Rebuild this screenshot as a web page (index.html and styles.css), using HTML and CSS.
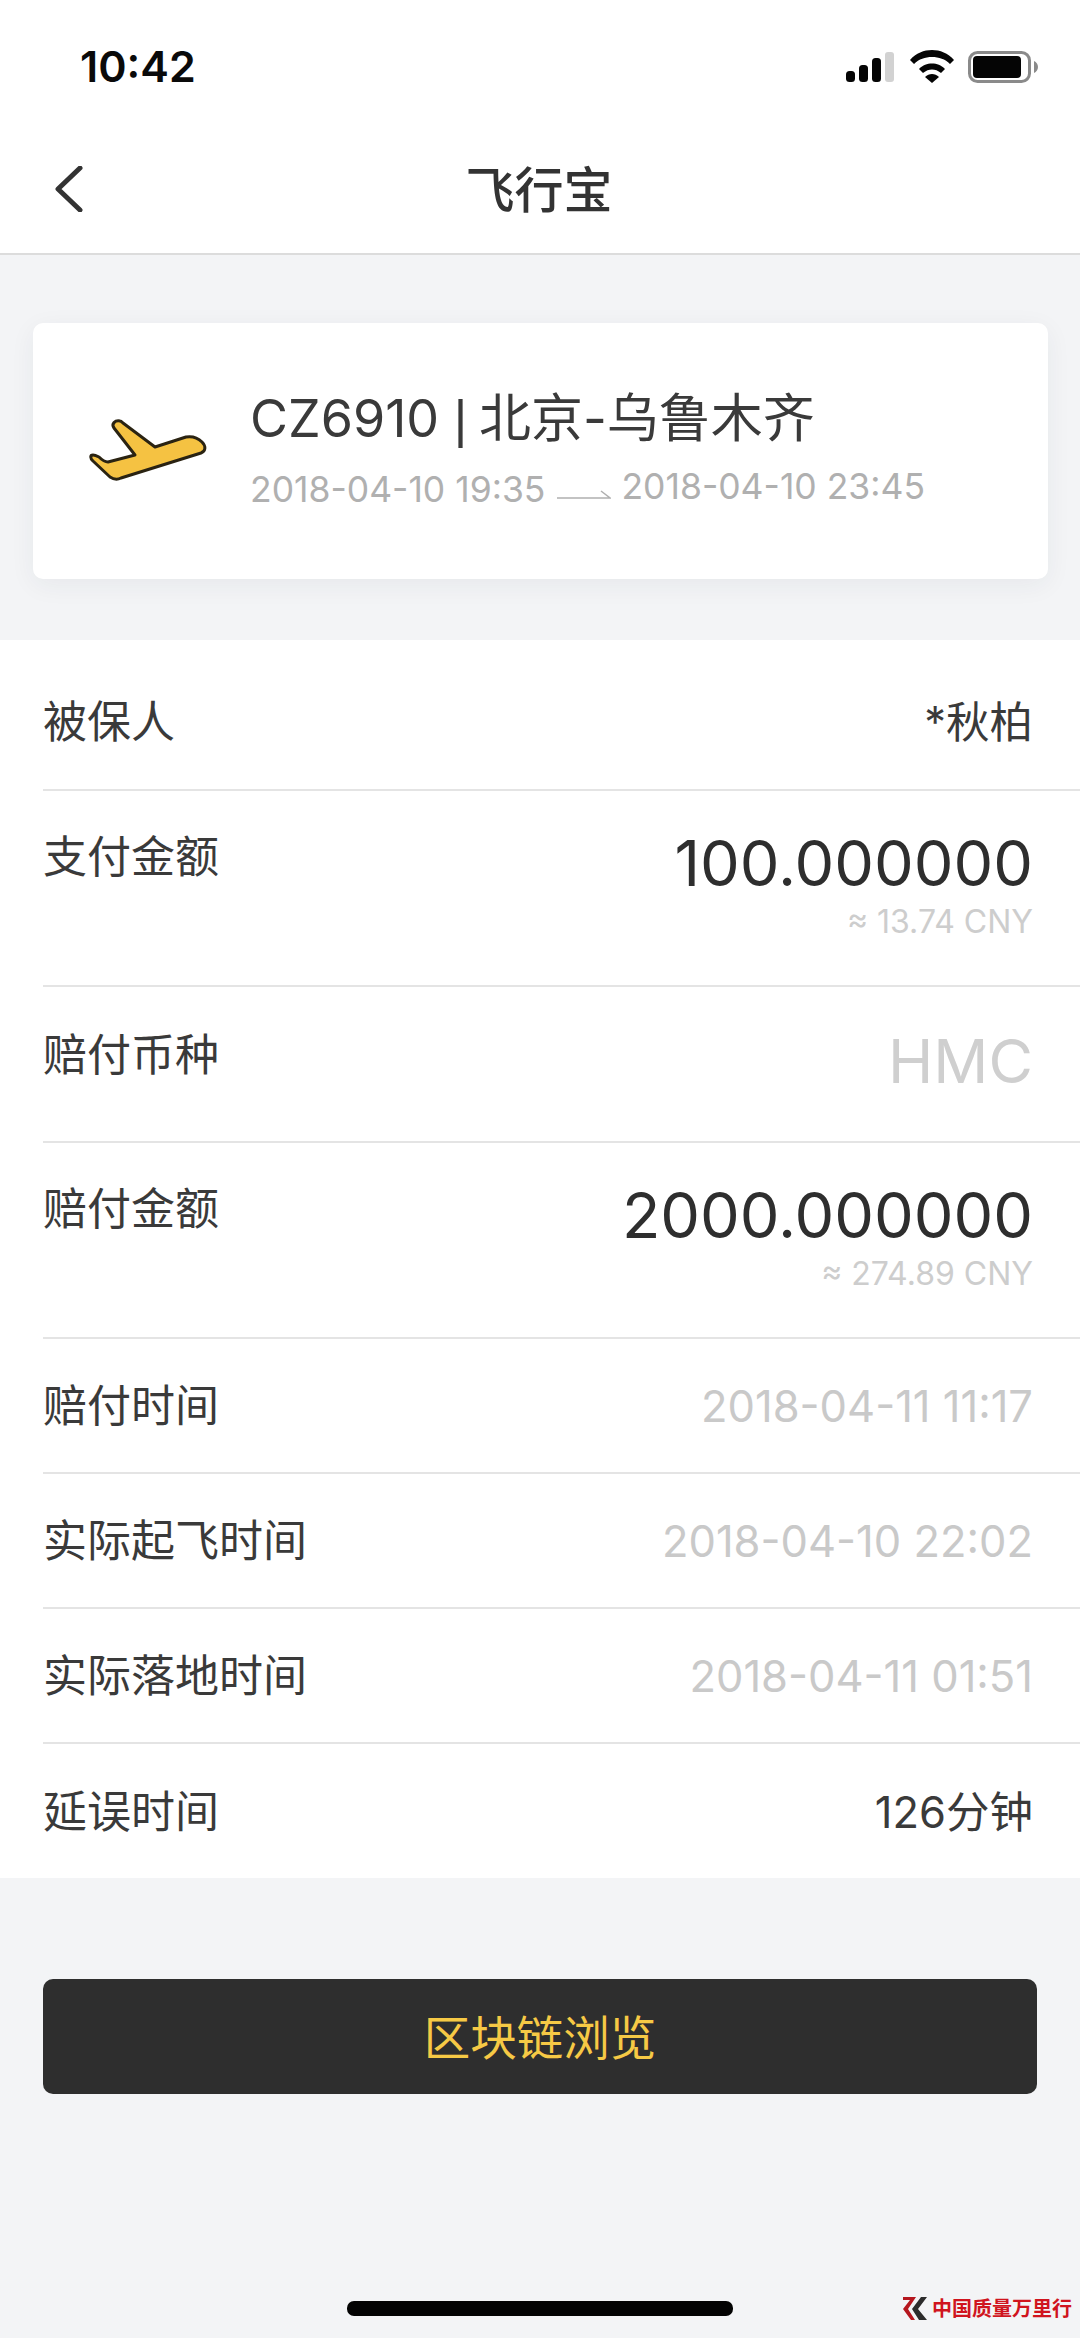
FILE: index.html
```html
<!DOCTYPE html>
<html lang="zh-CN">
<head>
<meta charset="utf-8">
<title>飞行宝</title>
<link rel="stylesheet" href="styles.css">
</head>
<body>
<div class="screen">
  <header class="top">
    <div class="status">
      <span class="clock">10:42</span>
      <div class="status-icons">
        <svg class="signal" viewBox="0 0 48 30"><rect x="0" y="19" width="9" height="11" rx="3.500"/><rect x="13" y="13" width="9" height="17" rx="3.500"/><rect x="26" y="6" width="9" height="24" rx="3.500"/><rect class="signal-off" x="39" y="0" width="9" height="30" rx="3"/></svg>
        <svg class="wifi" viewBox="0 0 44 33"><path d="M0 10C6 3 14 0 22 0s16 3 22 10l-4 4C35 9 29 7 22 7S9 9 4 14z"/><path d="M9 19c4-4 8-5.500 13-5.500S31 15 35 19l-4 4c-3-2.500-6-3.500-9-3.500S16 20.500 13 23z"/><path d="M15 27c2-2 4.500-3 7-3s5 1 7 3l-7 6z"/></svg>
        <svg class="battery" viewBox="0 0 70 32"><rect x="1.500" y="1.500" width="60" height="29" rx="8" fill="none" stroke="#8a8a8a" stroke-width="3"/><rect x="5" y="5" width="48" height="22" rx="4"/><path class="battery-cap" d="M66 10c2.500 1 4 3.500 4 6s-1.500 5-4 6z"/></svg>
      </div>
    </div>
    <nav class="nav">
      <svg class="back" viewBox="0 0 30 46"><path d="M26 2 4 23l22 21" fill="none" stroke="#333" stroke-width="5" stroke-linecap="round" stroke-linejoin="round"/></svg>
      <h1 class="nav-title">飞行宝</h1>
    </nav>
  </header>

  <section class="flight">
    <div class="flight-card">
      <svg class="plane" viewBox="0 0 140 80"><path d="M34 18c-3-4 1-8 6-7 1 0 2 1 3 2l32 24 31-10c6-1 12 1 16 5s4 9-1 11L41 68c-4 2-8 1-11-1L13 51c-3-3-3-6 0-6 2 0 4 1 6 2 3 3 6 5 9 5l27-7z" fill="#f5c242" stroke="#2a2312" stroke-width="3" stroke-linejoin="round"/></svg>
      <div class="flight-info">
        <div class="flight-name">CZ6910 <span class="sep">|</span> 北京-乌鲁木齐</div>
        <div class="flight-times">
          <span>2018-04-10 19:35</span>
          <svg class="arrow" viewBox="0 0 54 10"><path d="M0 9h53L44 2" fill="none" stroke="#b0b0b0" stroke-width="1.500"/></svg>
          <span class="time-end">2018-04-10 23:45</span>
        </div>
      </div>
    </div>
  </section>

  <section class="details">
    <div class="row row-plain"><span class="label">被保人</span><span class="value value-dark">*秋柏</span></div>
    <div class="row row-amount">
      <span class="label">支付金额</span>
      <div class="amount"><span class="amount-num">100.000000</span><span class="amount-sub">≈ 13.74 CNY</span></div>
    </div>
    <div class="row row-coin"><span class="label">赔付币种</span><span class="coin">HMC</span></div>
    <div class="row row-amount">
      <span class="label">赔付金额</span>
      <div class="amount"><span class="amount-num">2000.000000</span><span class="amount-sub">≈ 274.89 CNY</span></div>
    </div>
    <div class="row"><span class="label">赔付时间</span><span class="value">2018-04-11 11:17</span></div>
    <div class="row"><span class="label">实际起飞时间</span><span class="value">2018-04-10 22:02</span></div>
    <div class="row"><span class="label">实际落地时间</span><span class="value">2018-04-11 01:51</span></div>
    <div class="row row-last"><span class="label">延误时间</span><span class="value value-dark">126分钟</span></div>
  </section>

  <div class="action"><button class="chain-btn">区块链浏览</button></div>
  <div class="home-bar"></div>

  <div class="mark">
    <svg class="mark-logo" viewBox="0 0 24 25"><path d="M0 1h13L5 13l7 11H8L0 13l7-9H0z" fill="#b5161e"/><path d="M24 1h-6l-9 12 7 11h8l-9-11z" fill="#2c2c2c"/></svg>
    <span class="mark-text">中国质量万里行</span>
  </div>
</div>
</body>
</html>
```
FILE: styles.css
```css
* { box-sizing: border-box; }

html, body { margin: 0; padding: 0; }

body {
  background: #f3f4f6;
  font-family: Inter, "Noto Sans CJK SC", sans-serif;
  color: #333;
}

.screen {
  position: relative;
  width: 1080px;
  height: 2338px;
  overflow: hidden;
  background: #f3f4f6;
}

/* status bar and navigation */
.top {
  height: 255px;
  background: #fff;
  border-bottom: 2px solid #dcdcdc;
}

.status {
  height: 132px;
  padding: 44px 42px 0 80px;
  display: flex;
  justify-content: space-between;
  align-items: flex-start;
}

.clock {
  font-size: 43px;
  line-height: 44px;
  font-weight: 600;
  color: #0a0a0a;
}

.status-icons {
  display: flex;
  align-items: center;
  gap: 14px;
  padding-top: 6px;
}

.status-icons svg { display: block; fill: #050505; }
.signal { width: 48px; height: 30px; margin-right: 2px; }
.signal .signal-off { fill: #d2d2d2; }
.wifi { width: 44px; height: 33px; }
.battery { width: 70px; height: 32px; }
.battery .battery-cap { fill: #8a8a8a; }

.nav {
  position: relative;
  height: 121px;
  display: flex;
  align-items: center;
  justify-content: center;
  padding-bottom: 4px;
}

.back {
  position: absolute;
  left: 54px;
  top: 34px;
  width: 30px;
  height: 46px;
}

.nav-title {
  margin: 0 2px 0 0;
  font-size: 49px;
  line-height: 56px;
  font-weight: 500;
  color: #333;
}

/* flight summary */
.flight {
  height: 385px;
  padding: 68px 32px 0 33px;
}

.flight-card {
  height: 256px;
  background: #fff;
  border-radius: 10px;
  box-shadow: 0 6px 26px rgba(40, 50, 70, 0.06);
  display: flex;
  align-items: center;
  padding: 0 0 0 47px;
}

.plane {
  width: 140px;
  height: 80px;
  margin-top: -2px;
  flex: none;
}

.flight-info {
  margin-left: 30px;
}

.flight-name {
  font-size: 52px;
  line-height: 64px;
  color: #3a3a3a;
  white-space: nowrap;
}

.sep {
  font-family: "Liberation Sans", sans-serif;
  margin-right: -3px;
}

.flight-times {
  display: flex;
  align-items: center;
  margin-top: 14px;
  font-size: 35.500px;
  line-height: 44px;
  color: #b0b0b0;
  white-space: nowrap;
}

.arrow {
  width: 54px;
  height: 10px;
  margin: 8px 10px 0 12px;
}

.time-end { margin-bottom: 6px; }

/* detail rows */
.details {
  background: #fff;
  padding-left: 43px;
  height: 1238px;
}

.row {
  height: 135px;
  padding-right: 47px;
  border-bottom: 2px solid #e4e4e4;
  display: flex;
  justify-content: space-between;
  align-items: center;
}

.row-plain { height: 151px; padding-top: 14px; }
.row-amount { height: 196px; align-items: flex-start; padding-top: 38px; }
.row-coin { height: 156px; align-items: flex-start; padding-top: 40px; }
.row-last { border-bottom: 0; }

.label {
  font-size: 44px;
  line-height: 56px;
  color: #3a3a3a;
}

.value {
  font-size: 43.500px;
  line-height: 56px;
  color: #c9c9c9;
  white-space: nowrap;
}

.value-dark { color: #3a3a3a; }

.amount {
  display: flex;
  flex-direction: column;
  align-items: flex-end;
}

.amount-num {
  font-size: 63px;
  line-height: 68px;
  color: #2e2e2e;
}

.amount-sub {
  margin-top: 5px;
  font-size: 32px;
  line-height: 40px;
  color: #cdcdcd;
}

.coin {
  font-size: 61px;
  line-height: 68px;
  color: #cfcfcf;
}

/* bottom action */
.action { padding: 101px 43px 0; }

.chain-btn {
  display: block;
  width: 100%;
  height: 115px;
  padding: 0 0 5px;
  border: 0;
  border-radius: 10px;
  background: #2e2e2e;
  color: #f6c945;
  font-family: inherit;
  font-size: 46.500px;
}

.home-bar {
  width: 386px;
  height: 15px;
  margin: 207px auto 0 347px;
  border-radius: 7px;
  background: #030303;
}

/* corner watermark */
.mark {
  position: absolute;
  left: 903px;
  top: 2294px;
  display: flex;
  align-items: center;
  gap: 5px;
}

.mark-logo { width: 24px; height: 25px; display: block; }

.mark-text {
  font-family: "Noto Sans CJK SC", sans-serif;
  font-size: 20px;
  line-height: 28px;
  font-weight: 700;
  color: #d0141e;
  white-space: nowrap;
}
```
